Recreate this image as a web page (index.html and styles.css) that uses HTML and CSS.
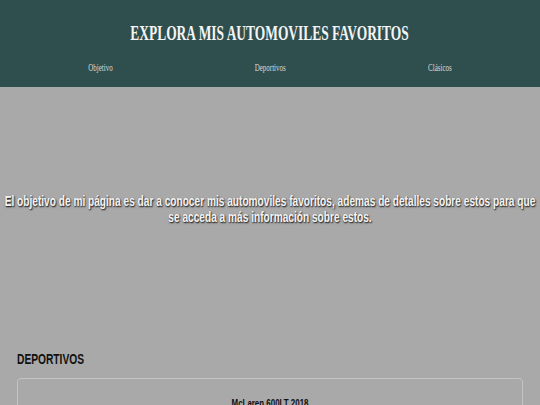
FILE: index.html
```html
<!DOCTYPE html>
<html lang="es">
<head>
<meta charset="utf-8">
<title>Explora mis automoviles favoritos</title>
<link rel="stylesheet" href="styles.css">
</head>
<body>
<header class="header">
  <h1 class="title">EXPLORA MIS AUTOMOVILES FAVORITOS</h1>
  <nav class="nav">
    <a class="nav-link" href="#objetivo">Objetivo</a>
    <a class="nav-link" href="#deportivos">Deportivos</a>
    <a class="nav-link" href="#clasicos">Clásicos</a>
  </nav>
</header>
<section class="hero" id="objetivo">
  <p class="hero-text">El objetivo de mi página es dar a conocer mis automoviles favoritos, ademas de detalles sobre estos para que se acceda a más información sobre estos.</p>
</section>
<section class="section" id="deportivos">
  <h2 class="section-title">DEPORTIVOS</h2>
  <div class="card">
    <h3 class="card-title">McLaren 600LT 2018</h3>
  </div>
</section>
</body>
</html>
```
FILE: styles.css
```css
html, body {
  margin: 0;
  padding: 0;
}
body {
  background: #a9a9a9;
  font-family: "Liberation Sans", Arial, sans-serif;
  overflow-x: hidden;
}
.header {
  background: #2f4f4f;
  height: 87px;
  display: flex;
  flex-direction: column;
  align-items: center;
}
.title {
  margin: 21px 0 0;
  font-family: "Liberation Serif", serif;
  font-size: 21px;
  line-height: 24px;
  font-weight: bold;
  color: #f4f4f4;
  white-space: nowrap;
  transform: scaleX(0.64);
}
.nav {
  align-self: stretch;
  display: grid;
  grid-template-columns: repeat(3, 1fr);
  padding: 0 15px;
  margin-top: 16px;
}
.nav-link {
  justify-self: center;
  font-family: "Liberation Serif", serif;
  font-size: 10px;
  line-height: 14px;
  color: #d8d8d8;
  text-decoration: none;
  transform: scaleX(0.7);
}
.hero {
  height: 243px;
  display: flex;
  align-items: center;
  justify-content: center;
  overflow: hidden;
}
.hero-text {
  flex: none;
  width: 752px;
  margin: 0;
  text-align: center;
  font-size: 14px;
  line-height: 16px;
  font-weight: bold;
  color: #f4f4f4;
  text-shadow: 1px 1px 2px #000;
  transform: scaleX(0.724);
}
.section {
  padding: 0 17px;
}
.section-title {
  margin: 20px 0 0;
  font-size: 14px;
  line-height: 18px;
  font-weight: bold;
  color: #111;
  transform: scaleX(0.73);
  transform-origin: left center;
}
.card {
  margin-top: 10px;
  border: 1px solid #c4c4c4;
  border-radius: 4px;
  padding: 17px 10px;
  text-align: center;
}
.card-title {
  margin: 0;
  font-size: 11px;
  line-height: 14px;
  font-weight: bold;
  color: #111;
  transform: scaleX(0.72);
}
```
